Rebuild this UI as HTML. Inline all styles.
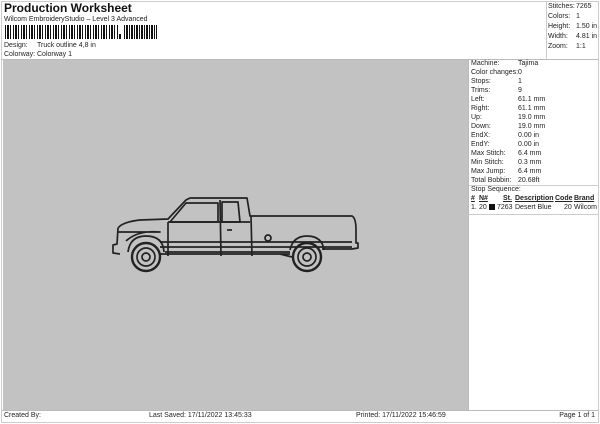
<!DOCTYPE html>
<html><head><style>
body{margin:0;width:600px;height:424px;background:#fff;font-family:"Liberation Sans",sans-serif;color:#222;position:relative;overflow:hidden;font-size:7px}
.a{position:absolute;white-space:nowrap}
.box{position:absolute;border:1px solid #ccc}
</style></head><body>
<div class="box" style="left:1px;top:1px;width:596px;height:420px"></div>
<div class="a" style="left:4px;top:1px;font-size:12px;font-weight:bold;color:#111">Production Worksheet</div>
<div class="a" style="left:4px;top:16px">Wilcom EmbroideryStudio – Level 3 Advanced</div>
<div class="a" style="left:5px;top:25px;width:113px;height:14px;background:repeating-linear-gradient(90deg,#111 0 1px,#fff 1px 2px,#111 2px 4px,#fff 4px 5px,#111 5px 6px,#fff 6px 8px)"></div>
<div class="a" style="left:119px;top:34px;width:2px;height:5px;background:#111"></div>
<div class="a" style="left:124px;top:25px;width:33px;height:14px;background:repeating-linear-gradient(90deg,#111 0 1px,#fff 1px 2px,#111 2px 4px,#fff 4px 5px)"></div>
<div class="a" style="left:4px;top:42px">Design:</div><div class="a" style="left:37px;top:42px">Truck outline 4,8 in</div>
<div class="a" style="left:4px;top:51px">Colorway:</div><div class="a" style="left:37px;top:51px">Colorway 1</div>
<div class="a" style="left:2px;top:59px;width:596px;border-top:1px solid #bbb"></div>
<div class="a" style="left:546px;top:1px;height:58px;border-left:1px solid #ccc"></div>
<div class="a" style="left:548px;top:2px;line-height:10px">Stitches:<br>Colors:<br>Height:<br>Width:<br>Zoom:</div>
<div class="a" style="left:576px;top:2px;line-height:10px">7265<br>1<br>1.50 in<br>4.81 in<br>1:1</div>
<div class="a" style="left:3px;top:60px;width:465px;height:350px;background:#c2c2c2"></div>
<div class="a" style="left:468px;top:60px;height:350px;border-left:1px solid #bbb"></div>
<div class="a" style="left:471px;top:58.5px;line-height:9px">Machine:<br>Color changes:<br>Stops:<br>Trims:<br>Left:<br>Right:<br>Up:<br>Down:<br>EndX:<br>EndY:<br>Max Stitch:<br>Min Stitch:<br>Max Jump:<br>Total Bobbin:</div>
<div class="a" style="left:518px;top:58.5px;line-height:9px">Tajima<br>0<br>1<br>9<br>61.1 mm<br>61.1 mm<br>19.0 mm<br>19.0 mm<br>0.00 in<br>0.00 in<br>6.4 mm<br>0.3 mm<br>6.4 mm<br>20.68ft</div>
<div class="a" style="left:469px;top:185px;width:129px;border-top:1px solid #ccc"></div>
<div class="a" style="left:471px;top:186px">Stop Sequence:</div>
<div class="a" style="left:471px;top:195px;font-weight:bold;text-decoration:underline">#</div>
<div class="a" style="left:479px;top:195px;font-weight:bold;text-decoration:underline">N#</div>
<div class="a" style="left:503px;top:195px;font-weight:bold;text-decoration:underline">St.</div>
<div class="a" style="left:515px;top:195px;font-weight:bold;text-decoration:underline">Description</div>
<div class="a" style="left:555px;top:195px;font-weight:bold;text-decoration:underline">Code</div>
<div class="a" style="left:574px;top:195px;font-weight:bold;text-decoration:underline">Brand</div>
<div class="a" style="left:471px;top:204px">1.</div><div class="a" style="left:479px;top:204px">20</div>
<div class="a" style="left:489px;top:204px;width:6px;height:6px;background:#111"></div>
<div class="a" style="left:497px;top:204px">7263</div><div class="a" style="left:515px;top:204px">Desert Blue</div>
<div class="a" style="left:564px;top:204px">20</div><div class="a" style="left:574px;top:204px">Wilcom</div>
<div class="a" style="left:469px;top:214px;width:129px;border-top:1px solid #ccc"></div>
<div class="a" style="left:2px;top:410px;width:596px;border-top:1px solid #bbb"></div>
<div class="a" style="left:4px;top:412px">Created By:</div>
<div class="a" style="left:149px;top:412px">Last Saved: 17/11/2022 13:45:33</div>
<div class="a" style="left:356px;top:412px">Printed: 17/11/2022 15:46:59</div>
<div class="a" style="right:5px;top:412px">Page 1 of 1</div>
<svg class="a" style="left:0;top:0" width="600" height="424" fill="none" stroke="#222" stroke-width="1.7" stroke-linejoin="round">
<path d="M118 228 Q122 222 140 220 L168 219 L186 200 L190 198 L247 198 L250 216 L352 216 Q356 218 356 230 L356 243 L358 243 L358 248 L352 249 L322 249 M118 228 L117 244 L113 245 L113 253 L120 254 M160 254 L290 254 M280 254 L292 257"/>
<path d="M170 222 L186 203 L218 203 L218 222 Z M222 202 L238 202 L240 222 L222 222 Z"/>
<path d="M168 222 L250 222 M220 200 L221 256 M251 216 L252 256 M168 222 L168 256 M118 232 L160 232 Q138 230 126 241"/>
<path d="M160 242 L352 242 M160 247 L352 247 M165 252 L290 252"/>
<path d="M128 252 Q130 236 146 236 Q163 236 164 252 M290 250 Q293 236 307 236 Q322 236 324 250"/>
<path d="M227 230 L232 230"/>
<circle cx="268" cy="238" r="3"/>
<circle cx="146" cy="257" r="14" stroke-width="2.4"/><circle cx="146" cy="257" r="9"/><circle cx="146" cy="257" r="4"/>
<circle cx="307" cy="257" r="14" stroke-width="2.4"/><circle cx="307" cy="257" r="9"/><circle cx="307" cy="257" r="4"/>
</svg>
</body></html>
